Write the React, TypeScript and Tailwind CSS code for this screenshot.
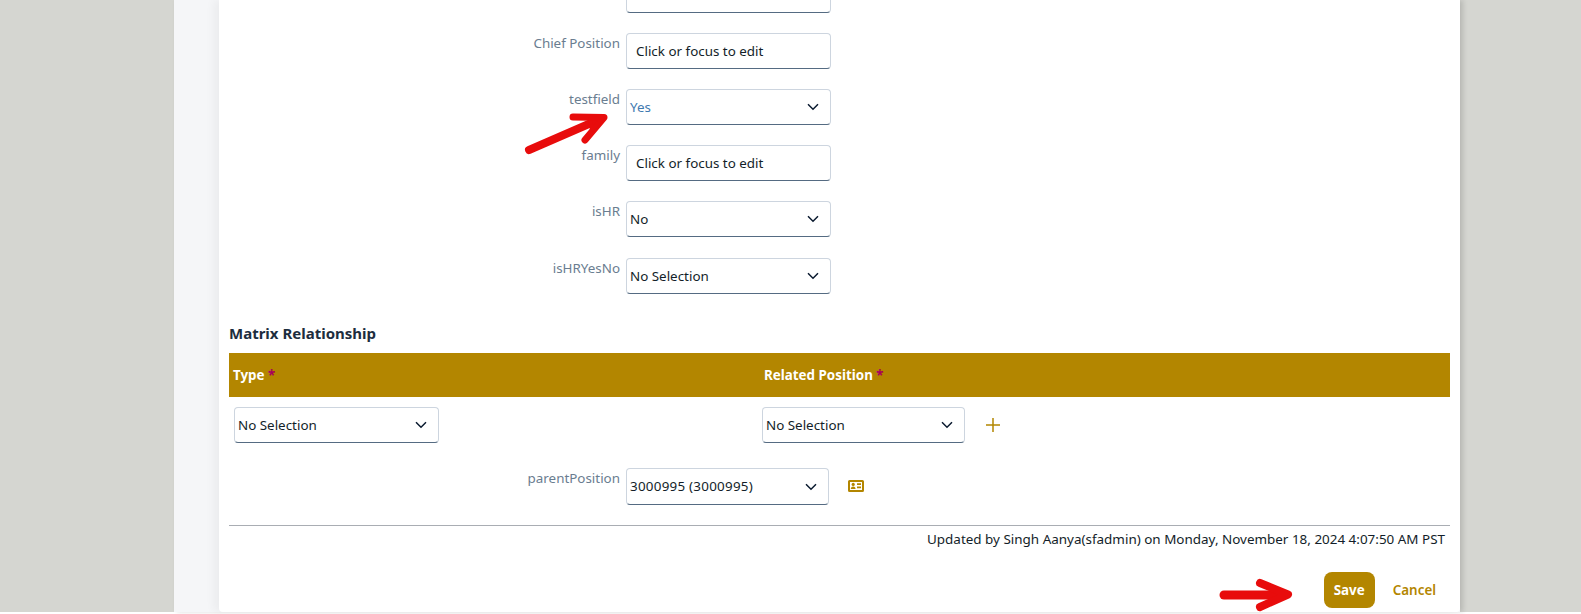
function Chevron() {
  return (
    <svg width="12" height="8" viewBox="0 0 12 8" fill="none" stroke="#0a1a2f" strokeWidth="1.5">
      <path d="M1 1.2 L6 6.2 L11 1.2" />
    </svg>
  );
}

function TextBox() {
  return (
    <div className="w-[205px] h-[36px] flex items-center pl-[9px] bg-white border border-[#cdd5df] border-b-[#556b82] rounded-[4px] text-[13.4px] text-[#131e29]">
      Click or focus to edit
    </div>
  );
}

function Select({ value, w = "w-[205px] h-[36px]", color = "text-[#131e29]" }: { value: string; w?: string; color?: string }) {
  return (
    <div className={`${w} flex items-center justify-between pl-[3px] pr-[11px] bg-white border border-[#cdd5df] border-b-[#556b82] rounded-[4px] text-[13.4px] ${color}`}>
      <span>{value}</span>
      <Chevron />
    </div>
  );
}

function Field({ label, children, className }: { label: string; children: React.ReactNode; className?: string }) {
  return (
    <div className={`flex ${className ?? ""}`}>
      <div className="w-[391px] text-right text-[13.4px] text-[#6a7d90] pt-[1px] leading-[18px]">{label}</div>
      <div className="ml-[6px]">{children}</div>
    </div>
  );
}

function CardIcon() {
  return (
    <svg width="16" height="12" viewBox="0 0 16 12" fill="#b38600">
      <path fillRule="evenodd" d="M1.500 0h13A1.500 1.500 0 0 1 16 1.500v9a1.500 1.500 0 0 1-1.500 1.500h-13A1.500 1.500 0 0 1 0 10.500v-9A1.500 1.500 0 0 1 1.500 0zM2 2v8h12V2z" />
      <circle cx="5.200" cy="4.400" r="1.600" />
      <path d="M2.800 9c0-1.500 1-2.500 2.400-2.500S7.600 7.500 7.600 9zM9 3.200h4v1.800H9zM9 6.500h4v1.800H9z" />
    </svg>
  );
}

export default function App() {
  return (
    <div className="relative h-[614px] w-[1581px] overflow-hidden bg-white font-['Noto_Sans',sans-serif]">
      <div className="h-[612px] bg-[#d5d6d1]">
        <div className="ml-[174px] flex h-full w-[1286px] justify-end bg-[#f5f6f8] shadow-[3px_0_5px_rgba(0,0,0,0.14)]">
          <div className="w-[1241px] h-full bg-white rounded-b-[4px] px-[10px] shadow-[-6px_0_8px_rgba(0,0,0,0.04)]">
            <div className="h-[13px] ml-[397px] w-[205px] bg-white border border-[#cdd5df] border-b-[#556b82] border-t-0 rounded-b-[4px]" />
            <Field label="Chief Position" className="mt-[20px]"><TextBox /></Field>
            <Field label="testfield" className="mt-[20px]"><Select value="Yes" color="text-[#3f7ab0]" /></Field>
            <Field label="family" className="mt-[20px]"><TextBox /></Field>
            <Field label="isHR" className="mt-[20px]"><Select value="No" /></Field>
            <Field label="isHRYesNo" className="mt-[21px]"><Select value="No Selection" /></Field>

            <div className="mt-[29px] text-[15px] font-bold text-[#1d2d3e] leading-[20px]">Matrix Relationship</div>
            <div className="mt-[10px] h-[44px] bg-[#b38600] flex items-center text-[13.4px] font-bold text-white">
              <div className="w-[535px] pl-[4px]">Type <span className="text-[#a8005c]">*</span></div>
              <div>Related Position <span className="text-[#a8005c]">*</span></div>
            </div>
            <div className="mt-[10px] flex items-center pl-[5px]">
              <Select value="No Selection" />
              <div className="ml-[323px]"><Select value="No Selection" w="w-[203px] h-[36px]" /></div>
              <svg className="ml-[20px]" width="16" height="16" viewBox="0 0 16 16" stroke="#b38600" strokeWidth="1.5"><path d="M8 1v14M1 8h14" /></svg>
            </div>
            <Field label="parentPosition" className="mt-[25px]">
              <div className="flex items-center">
                <Select value="3000995 (3000995)" w="w-[203px] h-[37px]" color="text-[#131e29] tracking-[0.25px]" />
                <div className="ml-[19px] mb-[2px]"><CardIcon /></div>
              </div>
            </Field>
            <div className="mt-[20px] border-t border-[#a9adb3]" />
            <div className="mt-[4px] text-right pr-[5px] text-[13.45px] text-[#131e29] leading-[18px]">Updated by Singh Aanya(sfadmin) on Monday, November 18, 2024 4:07:50 AM PST</div>
            <div className="mt-[24px] flex justify-end items-center pr-[14px]">
              <div className="w-[51px] h-[36px] rounded-[8px] bg-[#b38600] text-white text-[13.4px] font-bold flex items-center justify-center">Save</div>
              <div className="ml-[18px] text-[13.4px] font-semibold text-[#b38600]">Cancel</div>
            </div>
          </div>
        </div>
      </div>
      <svg className="absolute left-0 top-0 pointer-events-none" width="1581" height="614" fill="none" stroke="#e80c0c" strokeLinecap="round" strokeLinejoin="round">
        <path d="M529 150 L598 120" strokeWidth="8" />
        <path d="M573 117 L604 117.500 L585 140" strokeWidth="7" />
        <path d="M590 119 L603 118 L592 130 Z" fill="#e80c0c" strokeWidth="4" />
        <path d="M1224 595 L1284 595" strokeWidth="9" />
        <path d="M1260 583 L1288 594.500 L1260 607" strokeWidth="8" />
      </svg>
    </div>
  );
}
